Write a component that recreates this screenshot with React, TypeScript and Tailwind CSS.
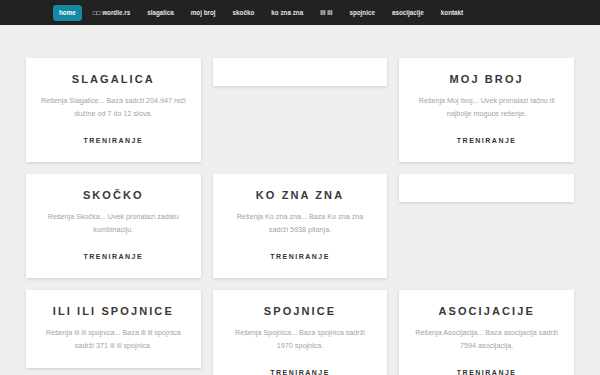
import React from "react";

type Game = {
  title?: string;
  text?: string;
  button?: boolean;
};

const navItems = [
  "home",
  "□□ wordle.rs",
  "slagalica",
  "moj broj",
  "skočko",
  "ko zna zna",
  "ili ili",
  "spojnice",
  "asocijacije",
  "kontakt",
];

const games: Game[] = [
  {
    title: "SLAGALICA",
    text: "Rešenja Slagalice... Baza sadrži 204.947 reči dužine od 7 do 12 slova.",
    button: true,
  },
  {},
  {
    title: "MOJ BROJ",
    text: "Rešenja Moj broj... Uvek pronalazi tačno ili najbolje moguće rešenje.",
    button: true,
  },
  {
    title: "SKOČKO",
    text: "Rešenja Skočka... Uvek pronalazi zadatu kombinaciju.",
    button: true,
  },
  {
    title: "KO ZNA ZNA",
    text: "Rešenja Ko zna zna... Baza Ko zna zna sadrži 5938 pitanja.",
    button: true,
  },
  {},
  {
    title: "ILI ILI SPOJNICE",
    text: "Rešenja Ili ili spojnica... Baza ili ili spojnica sadrži 371 ili ili spojnica.",
  },
  {
    title: "SPOJNICE",
    text: "Rešenja Spojnica... Baza spojnica sadrži 1970 spojnica.",
    button: true,
  },
  {
    title: "ASOCIJACIJE",
    text: "Rešenja Asocijacija... Baza asocijacija sadrži 7594 asocijacija.",
    button: true,
  },
];

function GameCard({ game }: { game: Game }) {
  if (!game.title) {
    return (
      <div className="h-[28px] bg-white shadow-[0_1px_3px_rgba(0,0,0,0.14)]" />
    );
  }

  return (
    <div className="bg-white px-[14px] pt-[13px] pb-[16px] text-center shadow-[0_1px_3px_rgba(0,0,0,0.14)]">
      <h2 className="text-[11px] font-bold leading-[16px] tracking-[2.1px] text-[#383838]">
        {game.title}
      </h2>

      <p className="mt-[7px] text-[7.2px] leading-[13px] text-[#a3a3a3]">
        {game.text}
      </p>

      {game.button && (
        <p className="mt-[16px] text-[7px] font-bold leading-[10px] tracking-[1.5px] text-[#333]">
          TRENIRANJE
        </p>
      )}
    </div>
  );
}

export default function App() {
  return (
    <main className="min-h-screen bg-[#efefef] font-['Liberation_Sans',Arial,sans-serif]">
      <nav className="flex h-[25px] items-center gap-[5px] bg-[#222222] pl-[53px]">
        {navItems.map((item, index) => (
          <span
            key={item}
            className={
              index === 0
                ? "flex h-[16px] items-center rounded-[3px] bg-[#1589a3] px-[6px] text-[6.3px] font-bold text-white shadow-[0_0_2px_rgba(0,0,0,0.5)]"
                : "px-[6px] text-[6.3px] font-bold text-[#e2e2e2]"
            }
          >
            {item}
          </span>
        ))}
      </nav>

      <div className="mx-auto mt-[33px] grid w-[548px] grid-cols-3 items-start gap-x-[12px] gap-y-[12px]">
        {games.map((game, index) => (
          <GameCard key={index} game={game} />
        ))}
      </div>
    </main>
  );
}
